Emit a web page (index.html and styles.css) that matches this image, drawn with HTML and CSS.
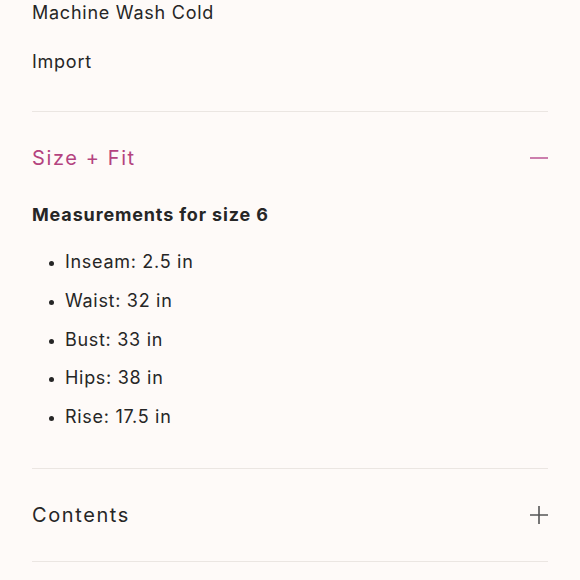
FILE: index.html
```html
<!DOCTYPE html>
<html lang="en">
<head>
<meta charset="utf-8">
<link rel="stylesheet" href="styles.css">
</head>
<body>
<div class="wrap">
  <div class="details">
    <p class="detail">Machine Wash Cold</p>
    <p class="detail">Import</p>
  </div>
  <section class="acc open">
    <div class="acc-head">
      <span class="acc-title">Size + Fit</span>
      <svg class="icon" width="18" height="18" viewBox="0 0 18 18"><path d="M0 9H18" stroke="#c0609a" stroke-width="1.6"/></svg>
    </div>
    <div class="acc-body">
      <h3 class="meas">Measurements for size 6</h3>
      <ul class="meas-list">
        <li>Inseam: 2.5 in</li>
        <li>Waist: 32 in</li>
        <li>Bust: 33 in</li>
        <li>Hips: 38 in</li>
        <li>Rise: 17.5 in</li>
      </ul>
    </div>
  </section>
  <section class="acc">
    <div class="acc-head">
      <span class="acc-title">Contents</span>
      <svg class="icon" width="18" height="18" viewBox="0 0 18 18"><path d="M0 9H18M9 0V18" stroke="#555" stroke-width="1.6"/></svg>
    </div>
  </section>
</div>
</body>
</html>
```
FILE: styles.css
```css
html, body {
  margin: 0;
  padding: 0;
  background: #fefaf8;
}
body {
  font-family: "Inter", "Open Sans", sans-serif;
  color: #262626;
}
.wrap {
  padding: 0 32px;
}
.details {
  display: flex;
  flex-direction: column;
  gap: 23px;
  padding-bottom: 36px;
  border-bottom: 1px solid #ebe6e2;
}
.detail {
  margin: 0;
  font-size: 18px;
  line-height: 26px;
  letter-spacing: 0.75px;
}
.acc {
  border-bottom: 1px solid #ebe6e2;
}
.acc-head {
  height: 92px;
  display: flex;
  align-items: center;
  justify-content: space-between;
}
.acc-title {
  font-size: 20px;
  letter-spacing: 1.6px;
  color: #262626;
}
.acc.open .acc-title {
  color: #b4437f;
}
.icon {
  display: block;
}
.acc-body {
  padding-bottom: 38px;
}
.meas {
  margin: 0;
  font-size: 18px;
  line-height: 22px;
  font-weight: 700;
  letter-spacing: 0.85px;
}
.meas-list {
  margin: 23px 0 0;
  padding: 0 0 0 33px;
  display: flex;
  flex-direction: column;
  gap: 12.75px;
}
.meas-list li {
  font-size: 18px;
  line-height: 26px;
  letter-spacing: 0.7px;
}
.meas-list li::marker {
  font-size: 14px;
}
```
